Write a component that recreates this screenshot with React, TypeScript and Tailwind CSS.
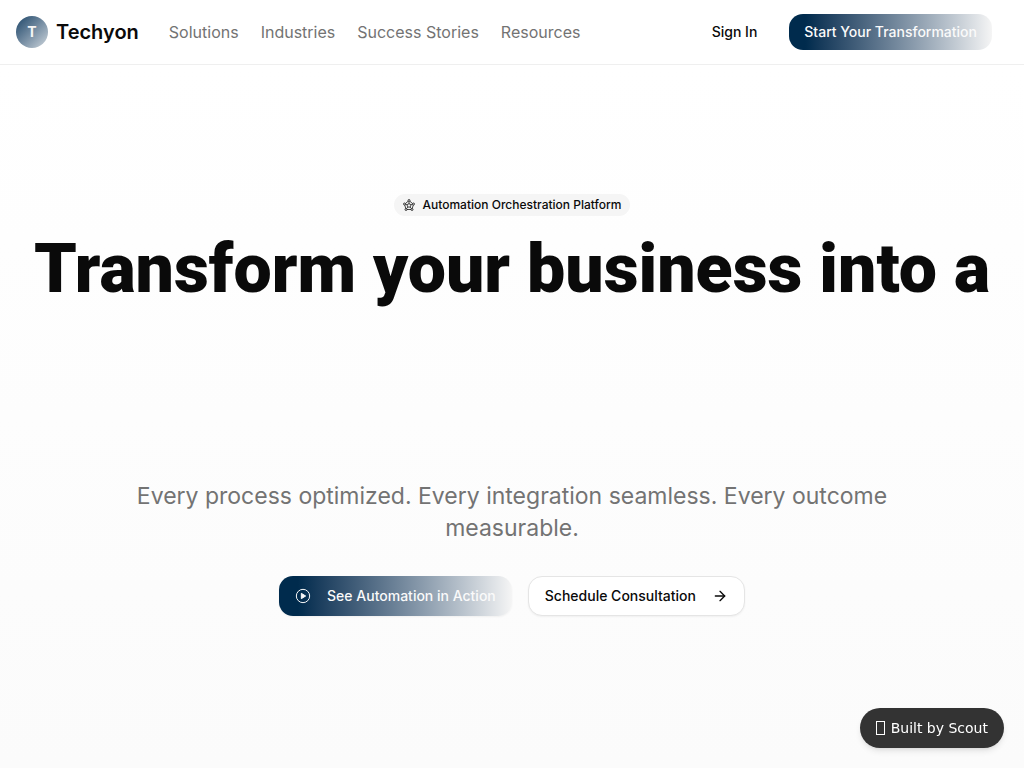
import { ArrowRight } from "lucide-react";

const links = ["Solutions", "Industries", "Success Stories", "Resources"];

function NetworkIcon() {
  return (
    <svg className="size-3" viewBox="0 0 24 24" fill="none" stroke="currentColor" strokeWidth="1.5" aria-hidden="true">
      <circle cx="12" cy="3" r="2" />
      <circle cx="3" cy="10" r="2" />
      <circle cx="21" cy="10" r="2" />
      <circle cx="6" cy="21" r="2" />
      <circle cx="18" cy="21" r="2" />
      <circle cx="12" cy="13" r="3.5" />
      <path d="M12 5v4.500M5 10.500l3.700 1.300M19 10.500l-3.700 1.300M7.200 19.300l2.500-3.500M16.800 19.300l-2.500-3.500M5 9l5.200-4.500M19 9l-5.200-4.500M3.500 12l2 7M20.500 12l-2 7M8 21h8" />
    </svg>
  );
}

function PlayIcon() {
  return (
    <svg className="size-4" viewBox="0 0 24 24" fill="none" stroke="currentColor" strokeWidth="1.500" aria-hidden="true">
      <circle cx="12" cy="12" r="10" />
      <path d="M9.500 8v8l6.500-4z" fill="currentColor" strokeLinejoin="round" />
    </svg>
  );
}

export default function App() {
  return (
    <div className="flex min-h-screen flex-col bg-white font-['Inter',sans-serif] text-neutral-950">
      <header className="border-b border-neutral-200/60 bg-white">
        <div className="flex h-16 items-center justify-between pr-8 pl-4">
          <div className="flex items-center gap-[30px]">
            <a href="#" className="flex items-center gap-2">
              <span className="flex size-8 items-center justify-center rounded-full bg-linear-to-br from-[#1c4668] to-[#d0d7dd] text-sm font-bold text-neutral-100">
                T
              </span>
              <span className="text-xl font-semibold">Techyon</span>
            </a>
            <nav className="flex items-center gap-[22px]">
              {links.map((link) => (
                <a key={link} href="#" className="text-base text-neutral-500">
                  {link}
                </a>
              ))}
            </nav>
          </div>
          <div className="flex items-center gap-4">
            <button className="h-9 px-4 text-sm font-medium">Sign In</button>
            <button className="h-9 rounded-[14px] bg-linear-to-r from-[#002b4d] from-8% to-[#f5f5f5] px-[15px] text-sm font-medium text-neutral-50">
              Start Your Transformation
            </button>
          </div>
        </div>
      </header>

      <main className="flex flex-1 flex-col items-center bg-linear-to-b from-white to-[#fbfbfb] px-4 pt-[129px] pb-16 text-center">
        <div className="flex items-center gap-2 rounded-full bg-neutral-100 px-[9px] py-[3px] text-xs font-medium leading-4">
          <NetworkIcon />
          Automation Orchestration Platform
        </div>
        <h1 className="mt-4 min-h-[248px] font-['Roboto',sans-serif] text-[68px] font-black leading-[74px]">
          Transform your business into a
        </h1>
        <p className="max-w-3xl text-[23px] leading-8 text-neutral-500">
          Every process optimized. Every integration seamless. Every outcome measurable.
        </p>
        <div className="mt-8 flex gap-4">
          <button className="flex h-10 items-center gap-4 rounded-[14px] bg-linear-to-r from-[#002b4d] from-8% to-[#f5f5f5] px-4 text-sm font-medium text-neutral-50 shadow-xs">
            <PlayIcon />
            See Automation in Action
          </button>
          <button className="flex h-10 items-center gap-4 rounded-[14px] border border-neutral-200 bg-white px-4 text-sm font-medium shadow-xs">
            Schedule Consultation
            <ArrowRight className="size-4" />
          </button>
        </div>
      </main>

      <a
        href="#"
        className="fixed right-5 bottom-5 flex h-10 items-center rounded-full bg-[#333333] px-4 font-['DejaVu_Sans',sans-serif] text-sm text-white shadow-md"
      >
        <span className="mr-1.5 h-3.5 w-[9px] border border-white" aria-hidden="true" />
        Built by Scout
      </a>
    </div>
  );
}
